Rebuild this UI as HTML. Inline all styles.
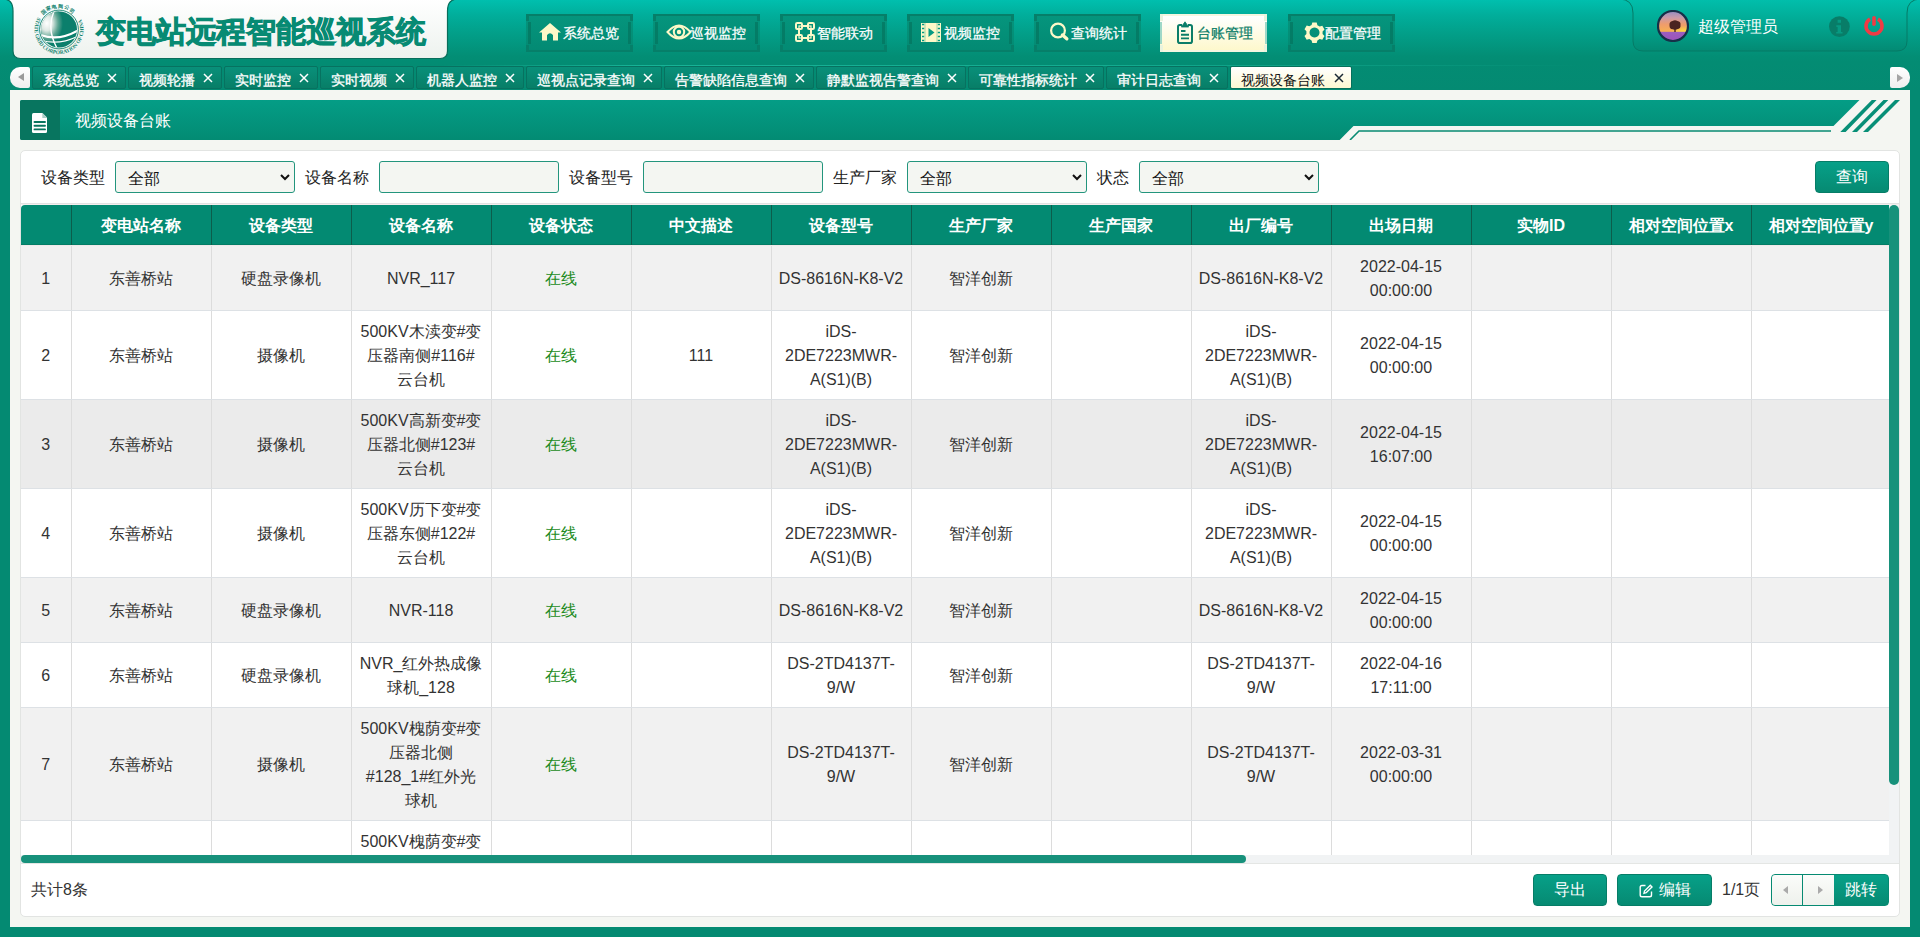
<!DOCTYPE html><html><head><meta charset="utf-8"><style>*{box-sizing:border-box;margin:0;padding:0}
html,body{width:1920px;height:937px;overflow:hidden;font-family:"Liberation Sans",sans-serif;}
body{background:#048a72;position:relative}
.abs{position:absolute}
#hdr{left:0;top:0;width:1920px;height:90px;background:linear-gradient(#00bfae 0px,#01ae9b 15px,#02a08a 32px,#038e75 56px,#038c73 62px,#048a72 90px)}
#hl{left:0;top:65px;width:1920px;height:1px;background:linear-gradient(90deg,rgba(40,210,180,0) 440px,rgba(40,210,180,.55) 640px,rgba(40,210,180,.45) 1100px,rgba(40,210,180,0) 1580px)}
#logo{left:13px;top:-2px;width:435px;height:61px;background:linear-gradient(#ffffff,#eef2ee);border:1px solid #0a6f5c;border-top:none;border-radius:0 0 7px 7px;box-shadow:0 1px 1px rgba(0,60,50,.4)}
#title{left:96px;top:11.5px;font-size:30px;font-weight:bold;color:#078a73;white-space:nowrap;-webkit-text-stroke:0.9px #078a73}
.nb{top:14px;height:38px;width:107px;background:linear-gradient(#05957d,#038a73);border-top:2px solid #067f69;border-bottom:2px solid #067f69;color:#fff;font-size:14px;white-space:nowrap}
.nb span{position:absolute;top:9px;left:37px;-webkit-text-stroke:0.25px currentColor}
.nb svg{position:absolute;left:13px;top:7px}
.nb.act{left:1160px!important;background:linear-gradient(#ffffff,#fdf8cc);border-color:#f4f6e0;color:#0b7d68}
.nb i{position:absolute;width:3px;background:#067f69}
.nb .c1{left:0;top:-2px;height:7px}.nb .c2{right:0;top:-2px;height:7px}.nb .c3{left:0;bottom:-2px;height:7px}.nb .c4{right:0;bottom:-2px;height:7px}
.nb .c5{left:2px;top:6px;bottom:6px;width:3px;background:rgba(4,118,96,.75)}.nb .c6{right:2px;top:6px;bottom:6px;width:3px;background:rgba(4,118,96,.75)}
.nb.act i{background:#e9f3de}.nb.act .c5,.nb.act .c6{left:0;width:2px;background:#9fd8c8}.nb.act .c6{left:auto;right:0}
#user{left:1633px;top:-2px;width:275px;height:53px;background:linear-gradient(#04b8a4,#05937c);border:1px solid #07806a;border-top:none;border-radius:0 0 12px 12px}
.tab{top:66px;height:23px;background:linear-gradient(#09907a,#087e67);border:1px solid #077260;border-radius:2px;color:#fff;font-size:14px;white-space:nowrap}
.tab span{position:absolute;left:10px;top:5px;-webkit-text-stroke:0.3px currentColor}
.tab svg{position:absolute;right:8px;top:6px}
.tab.act{background:linear-gradient(#ffffff,#fdf8d2);color:#111;border-color:#06705c}
.tab.act svg{right:7px;top:5.5px}
#tl{left:10px;top:67px;width:20px;height:21px;background:linear-gradient(#fff,#eee);border-radius:10px 2px 2px 10px}
#tr{left:1890px;top:67px;width:20px;height:21px;background:linear-gradient(#fff,#eee);border-radius:2px 10px 10px 2px}
#tl b{position:absolute;left:8px;top:6px;border-right:6px solid #9a9a9a;border-top:4.5px solid transparent;border-bottom:4.5px solid transparent}
#tr b{position:absolute;left:7px;top:7px;border-left:6px solid #a5a5a5;border-top:4px solid transparent;border-bottom:4px solid transparent}
#content{left:10px;top:90px;width:1900px;height:837px;background:#f4f6f2}
#panel{left:20px;top:150px;width:1880px;height:767px;background:#fff;border:1px solid #e2e4e2;border-radius:5px}
.lbl{font-size:16px;color:#222;top:168px;white-space:nowrap}
.sel{top:161px;height:32px;width:180px;border:1px solid #23957d;border-radius:3px;background:#f4f6f2;font-size:16px;color:#111}
.sel span{position:absolute;left:12px;top:7px}
.sel svg{position:absolute;right:4px;top:12px}
.btn{background:linear-gradient(#07a088,#068a72);border:1px solid #067d67;border-radius:4px;color:#fff;font-size:16px;text-align:center}
#tblwrap{left:21px;top:205px;width:1868px;height:650px;overflow:hidden;border-radius:4px 0 0 0}
table{border-collapse:collapse;table-layout:fixed;width:1870px}
td,th{border:1px solid #dde1e5;border-left-color:#dcdcdc;border-right-color:#dcdcdc;text-align:center;vertical-align:middle;font-size:16px;color:#333;line-height:24px;padding:2px 6px 0;font-weight:normal;word-break:break-all}
th{background:#038a72;color:#fff;font-weight:bold;border-color:#0c5d4b;height:40px;border-top:none;border-bottom-color:#eee9e9;box-shadow:inset 0 -1px 0 #037d66}
tr td:first-child,tr th:first-child{border-left:none}
tr.r1 td{background:#f1f1f1}
tr.r0 td{background:#fff}
tr.r3 td{background:#ebebeb}
td em{font-style:normal;color:#228b22}
.tab.act span{-webkit-text-stroke:0}
</style></head><body>
<div id="hdr" class="abs"></div><div id="hl" class="abs"></div>
<svg class="abs" style="left:0;top:0" width="470" height="64" viewBox="0 0 470 64"><defs><linearGradient id="lg" x1="0" y1="0" x2="0" y2="1"><stop offset="0" stop-color="#ffffff"/><stop offset="1" stop-color="#edf2ee"/></linearGradient></defs><path d="M3 -1 Q13 -1 13 11 V51 Q13 58.5 20.5 58.5 H440 Q447.5 58.5 447.5 51 V11 Q447.5 -1 458 -1Z" fill="url(#lg)" stroke="#086e5b" stroke-width="1.2"/></svg>
<svg class="abs" style="left:28px;top:0px" width="64" height="60" viewBox="0 0 64 60">
<defs>
<radialGradient id="gl" cx="0.3" cy="0.42" r="0.62"><stop offset="0" stop-color="#ffffff"/><stop offset="0.35" stop-color="#dfe9e4"/><stop offset="0.7" stop-color="#5fa593"/><stop offset="1" stop-color="#0b7f6c"/></radialGradient>
<clipPath id="gc"><circle cx="31" cy="29.5" r="18"/></clipPath>
<path id="ringp" d="M9.8 17.25 A24.5 24.5 0 1 0 52.2 17.25"/>
<path id="ringt" d="M12.5 18.5 A21.5 21.5 0 0 1 49.5 18.5"/>
</defs>
<circle cx="31" cy="29.5" r="19.4" fill="none" stroke="#0b806c" stroke-width="0.9"/>
<g clip-path="url(#gc)">
<rect x="10" y="10" width="42" height="40" fill="#0b7f6c"/>
<ellipse cx="24" cy="26" rx="13" ry="17" fill="url(#gl)"/>
<path d="M8 33 Q30 44 54 28" stroke="#fff" stroke-width="2.2" fill="none"/>
<path d="M12 40 Q32 46 52 35" stroke="#fff" stroke-width="1.2" fill="none"/>
<path d="M26 11 Q18 30 30 50" stroke="#fff" stroke-width="1.4" fill="none"/>
</g>
<text font-family="Liberation Serif" font-weight="bold" font-size="5.4" fill="#0b806c"><textPath href="#ringp" textLength="100" lengthAdjust="spacingAndGlyphs">STATE GRID CORPORATION OF CHINA</textPath></text>
<text font-weight="bold" font-size="5" fill="#0b806c"><textPath href="#ringt" startOffset="4" textLength="34" lengthAdjust="spacing">国家电网公司</textPath></text>
</svg>

<div id="title" class="abs">变电站远程智能巡视系统</div>
<div class="nb abs" style="left:526px"><i class="c1"></i><i class="c2"></i><i class="c3"></i><i class="c4"></i><i class="c5"></i><i class="c6"></i><svg width="24" height="20" viewBox="0 0 24 20" style="left:12px;top:6px"><path d="M12 1 L23 10.5 L20 10.5 L20 18.5 L15 18.5 L15 13 Q12 9.5 9 13 L9 18.5 L4 18.5 L4 10.5 L1 10.5 Z" fill="#fdf8c8"/></svg><span>系统总览</span></div>
<div class="nb abs" style="left:653px"><i class="c1"></i><i class="c2"></i><i class="c3"></i><i class="c4"></i><i class="c5"></i><i class="c6"></i><svg width="26" height="18" viewBox="0 0 26 18" style="left:13px;top:7px"><path d="M1.5 9 Q13 -4 24.5 9 Q13 22 1.5 9 Z" fill="none" stroke="#fdf8c8" stroke-width="2"/><circle cx="13" cy="9" r="5.2" fill="none" stroke="#fdf8c8" stroke-width="2"/><circle cx="13" cy="9" r="2.2" fill="#fdf8c8"/></svg><span>巡视监控</span></div>
<div class="nb abs" style="left:780px"><i class="c1"></i><i class="c2"></i><i class="c3"></i><i class="c4"></i><i class="c5"></i><i class="c6"></i><svg width="20" height="20" viewBox="0 0 20 20" style="left:15px;top:6px" fill="none" stroke="#fdf8c8" stroke-width="2"><rect x="1" y="1" width="6" height="6" rx="1.2"/><rect x="13" y="1" width="6" height="6" rx="1.2"/><rect x="1" y="13" width="6" height="6" rx="1.2"/><rect x="13" y="13" width="6" height="6" rx="1.2"/><path d="M7 4H13M7 16H13M4 7V13M16 7V13"/><rect x="4" y="4" width="12" height="12" stroke-width="1.2"/></svg><span>智能联动</span></div>
<div class="nb abs" style="left:907px"><i class="c1"></i><i class="c2"></i><i class="c3"></i><i class="c4"></i><i class="c5"></i><i class="c6"></i><svg width="20" height="19" viewBox="0 0 20 19" style="left:14px;top:7px"><rect x="0" y="0" width="20" height="19" fill="#fdf8c8"/><path d="M1 1.5h2.2M1 5.5h2.2M1 9.5h2.2M1 13.5h2.2M1 17.5h2.2M16.8 1.5h2.2M16.8 5.5h2.2M16.8 9.5h2.2M16.8 13.5h2.2M16.8 17.5h2.2" stroke="#079a82" stroke-width="1.6"/><path d="M4 0V19M16 0V19" stroke="#079a82" stroke-width="0.6" opacity="0.6"/><path d="M7.5 5 L13.5 9.5 L7.5 14 Z" fill="#079a82"/></svg><span>视频监控</span></div>
<div class="nb abs" style="left:1034px"><i class="c1"></i><i class="c2"></i><i class="c3"></i><i class="c4"></i><i class="c5"></i><i class="c6"></i><svg width="22" height="22" viewBox="0 0 22 22" style="left:14px;top:5px"><circle cx="10" cy="9.5" r="6.9" fill="none" stroke="#fdf8c8" stroke-width="2.2"/><path d="M14.5 14 L18.8 17.8" stroke="#fdf8c8" stroke-width="3.4" stroke-linecap="round"/></svg><span>查询统计</span></div>
<div class="nb abs act" style="left:1161px"><i class="c1"></i><i class="c2"></i><i class="c3"></i><i class="c4"></i><i class="c5"></i><i class="c6"></i><svg width="16" height="23" viewBox="0 0 16 23" style="left:17px;top:5px" fill="none" stroke="#0b7d68" stroke-width="2"><path d="M5 4 H2.8 Q1 4 1 5.8 V20.2 Q1 22 2.8 22 H13.2 Q15 22 15 20.2 V5.8 Q15 4 13.2 4 H11"/><path d="M4.3 6 L8 0.8 L11.7 6 Z" fill="#0b7d68" stroke-width="0.8"/><path d="M4 10 H8.5 M4 13.8 H12 M4 17.4 H12" stroke-width="1.9"/></svg><span>台账管理</span></div>
<div class="nb abs" style="left:1288px"><i class="c1"></i><i class="c2"></i><i class="c3"></i><i class="c4"></i><i class="c5"></i><i class="c6"></i><svg width="21" height="21" viewBox="0 0 21 21" style="left:16px;top:5.5px"><path fill="#fdf8c8" fill-rule="evenodd" d="M8.3 0.6h4.4l0.7 2.6 2.3 1.3 2.6-0.7 2.2 3.8-1.9 1.9v2.6l1.9 1.9-2.2 3.8-2.6-0.7-2.3 1.3-0.7 2.6H8.3l-0.7-2.6-2.3-1.3-2.6 0.7-2.2-3.8 1.9-1.9V9.2L0.5 7.3l2.2-3.8 2.6 0.7 2.3-1.3z M10.5 5.5a5 5 0 1 0 0.01 0z"/></svg><span>配置管理</span></div>
<svg class="abs" style="left:1615px;top:0" width="305" height="56" viewBox="1615 0 305 56">
<defs><linearGradient id="ug" x1="0" y1="0" x2="0" y2="1"><stop offset="0" stop-color="#01bfac"/><stop offset="0.5" stop-color="#02a690"/><stop offset="1" stop-color="#038a73"/></linearGradient></defs>
<path d="M1619 -1 Q1633 -1 1633 13 V41 Q1633 51 1643 51 H1897 Q1907 51 1907 41 V13 Q1907 -1 1921 -1" fill="url(#ug)" stroke="#067a66" stroke-width="1"/>
</svg>
<svg class="abs" style="left:1657px;top:10px" width="32" height="32" viewBox="0 0 32 32"><defs><linearGradient id="av" x1="0" y1="0" x2="0" y2="1"><stop offset="0" stop-color="#8a8cc8"/><stop offset="0.35" stop-color="#c99aa8"/><stop offset="0.65" stop-color="#ef9c6c"/><stop offset="1" stop-color="#f7b050"/></linearGradient><linearGradient id="fld" x1="0" y1="0" x2="0" y2="1"><stop offset="0" stop-color="#9a5ec0"/><stop offset="1" stop-color="#a050b8"/></linearGradient><radialGradient id="sun" cx="0.85" cy="1" r="0.45"><stop offset="0" stop-color="#ffe040"/><stop offset="1" stop-color="#ffe040" stop-opacity="0"/></radialGradient><clipPath id="avc"><circle cx="16" cy="16" r="15"/></clipPath></defs><g clip-path="url(#avc)"><rect x="0" y="0" width="32" height="22" fill="url(#av)"/><rect x="0" y="8" width="32" height="14" fill="url(#sun)"/><rect x="0" y="21.8" width="32" height="11" fill="url(#fld)"/><path d="M12.5 15.5 Q12 11.5 15.5 11 Q18 9.5 20.5 11 Q24 11.5 23.5 15 Q24 19 20 19.2 Q18 20.5 16 19.2 Q12.5 19.5 12.5 15.5Z" fill="#4a2420"/><rect x="17.3" y="18" width="1.4" height="4" fill="#4a2420"/></g><circle cx="16" cy="16" r="15" fill="none" stroke="#163048" stroke-width="2.2"/></svg>
<div class="abs" style="left:1698px;top:17px;font-size:16px;color:#fff;white-space:nowrap">超级管理员</div>
<svg class="abs" style="left:1829px;top:16px" width="22" height="22" viewBox="0 0 22 22"><circle cx="10.4" cy="10.6" r="10.4" fill="#087d68"/><rect x="8.6" y="3.8" width="3.4" height="3" fill="#079a82"/><path d="M7.3 9.3h4.7v6.6h1.5v1.7H7.2v-1.7h1.4v-4.9H7.3z" fill="#079a82"/></svg>
<svg class="abs" style="left:1863px;top:15px" width="22" height="22" viewBox="0 0 22 22" fill="none" stroke="#f03a44" stroke-width="3.6"><path d="M7 4.07 A8 8 0 1 0 15 4.07"/><path d="M11 2.8V9.3" stroke-linecap="round"/></svg>

<div class="tab abs" style="left:32px;width:94px"><span>系统总览</span><svg width="10" height="10" viewBox="0 0 10 10"><path d="M1 1L9 9M9 1L1 9" stroke="#fff" stroke-width="1.5"/></svg></div>
<div class="tab abs" style="left:128px;width:94px"><span>视频轮播</span><svg width="10" height="10" viewBox="0 0 10 10"><path d="M1 1L9 9M9 1L1 9" stroke="#fff" stroke-width="1.5"/></svg></div>
<div class="tab abs" style="left:224px;width:94px"><span>实时监控</span><svg width="10" height="10" viewBox="0 0 10 10"><path d="M1 1L9 9M9 1L1 9" stroke="#fff" stroke-width="1.5"/></svg></div>
<div class="tab abs" style="left:320px;width:94px"><span>实时视频</span><svg width="10" height="10" viewBox="0 0 10 10"><path d="M1 1L9 9M9 1L1 9" stroke="#fff" stroke-width="1.5"/></svg></div>
<div class="tab abs" style="left:416px;width:108px"><span>机器人监控</span><svg width="10" height="10" viewBox="0 0 10 10"><path d="M1 1L9 9M9 1L1 9" stroke="#fff" stroke-width="1.5"/></svg></div>
<div class="tab abs" style="left:526px;width:136px"><span>巡视点记录查询</span><svg width="10" height="10" viewBox="0 0 10 10"><path d="M1 1L9 9M9 1L1 9" stroke="#fff" stroke-width="1.5"/></svg></div>
<div class="tab abs" style="left:664px;width:150px"><span>告警缺陷信息查询</span><svg width="10" height="10" viewBox="0 0 10 10"><path d="M1 1L9 9M9 1L1 9" stroke="#fff" stroke-width="1.5"/></svg></div>
<div class="tab abs" style="left:816px;width:150px"><span>静默监视告警查询</span><svg width="10" height="10" viewBox="0 0 10 10"><path d="M1 1L9 9M9 1L1 9" stroke="#fff" stroke-width="1.5"/></svg></div>
<div class="tab abs" style="left:968px;width:136px"><span>可靠性指标统计</span><svg width="10" height="10" viewBox="0 0 10 10"><path d="M1 1L9 9M9 1L1 9" stroke="#fff" stroke-width="1.5"/></svg></div>
<div class="tab abs" style="left:1106px;width:122px"><span>审计日志查询</span><svg width="10" height="10" viewBox="0 0 10 10"><path d="M1 1L9 9M9 1L1 9" stroke="#fff" stroke-width="1.5"/></svg></div>
<div class="tab abs act" style="left:1230px;width:122px"><span>视频设备台账</span><svg width="10" height="10" viewBox="0 0 10 10"><path d="M1 1L9 9M9 1L1 9" stroke="#1a2835" stroke-width="1.5"/></svg></div>
<div id="tl" class="abs"><b></b></div><div id="tr" class="abs"><b></b></div>
<div id="content" class="abs"></div>
<svg class="abs" style="left:20px;top:100px" width="1880" height="40" viewBox="0 0 1880 40">
<defs><linearGradient id="tb" x1="0" y1="0" x2="0" y2="1"><stop offset="0" stop-color="#049d86"/><stop offset="1" stop-color="#038b73"/></linearGradient></defs>
<path d="M2 0 H1839.5 L1813.5 26 H1333.5 L1319.7 40 H2 Q0 40 0 38 V2 Q0 0 2 0Z" fill="url(#tb)"/>
<path d="M0 2 Q0 0 2 0 H40 V40 H2 Q0 40 0 38Z" fill="#08755f"/>
<path d="M1330 40 L1339 31 H1811" stroke="#078b73" stroke-width="1.6" fill="none"/>
<path d="M1851.8 0 H1856.6 L1825.6 32 H1820.3Z M1863.5 0 H1868.3 L1837 32 H1832Z M1875 0 H1880 L1848 32 H1843Z" fill="#078f77"/>
<path d="M13.5 13 H22.5 L27 17.5 V31.5 Q27 33 25.5 33 H13.5 Q12 33 12 31.5 V14.5 Q12 13 13.5 13Z" fill="#fff"/>
<path d="M22.3 13 V18 H27 Z" fill="#08755f" opacity="0.35"/>
<path d="M14.5 22H25M14.5 25.7H25M14.5 29.4H25" stroke="#08755f" stroke-width="1.9" stroke-linecap="round"/>
</svg>
<div class="abs" style="left:75px;top:111px;font-size:16px;color:#fff;white-space:nowrap">视频设备台账</div>

<div id="panel" class="abs"></div>
<div class="lbl abs" style="left:41px">设备类型</div>
<div class="sel abs" style="left:115px"><span>全部</span><svg width="10" height="7" viewBox="0 0 10 7"><path d="M1 1 L5 5 L9 1" stroke="#111" stroke-width="2" fill="none"/></svg></div>
<div class="lbl abs" style="left:305px">设备名称</div>
<div class="sel abs" style="left:379px"></div>
<div class="lbl abs" style="left:569px">设备型号</div>
<div class="sel abs" style="left:643px"></div>
<div class="lbl abs" style="left:833px">生产厂家</div>
<div class="sel abs" style="left:907px"><span>全部</span><svg width="10" height="7" viewBox="0 0 10 7"><path d="M1 1 L5 5 L9 1" stroke="#111" stroke-width="2" fill="none"/></svg></div>
<div class="lbl abs" style="left:1097px">状态</div>
<div class="sel abs" style="left:1139px"><span>全部</span><svg width="10" height="7" viewBox="0 0 10 7"><path d="M1 1 L5 5 L9 1" stroke="#111" stroke-width="2" fill="none"/></svg></div>
<div class="btn abs" style="left:1815px;top:161px;width:74px;height:32px;line-height:30px">查询</div>
<div class="abs" style="left:20px;top:203px;width:1880px;height:1px;background:#e2e2e2"></div>
<div class="abs" style="left:21px;top:204px;width:1878px;height:1px;background:#f4eeee"></div>

<div id="tblwrap" class="abs"><table>
<colgroup><col style="width:50px"><col style="width:140px"><col style="width:140px"><col style="width:140px"><col style="width:140px"><col style="width:140px"><col style="width:140px"><col style="width:140px"><col style="width:140px"><col style="width:140px"><col style="width:140px"><col style="width:140px"><col style="width:140px"><col style="width:140px"></colgroup>
<tr class="hd"><th></th><th>变电站名称</th><th>设备类型</th><th>设备名称</th><th>设备状态</th><th>中文描述</th><th>设备型号</th><th>生产厂家</th><th>生产国家</th><th>出厂编号</th><th>出场日期</th><th>实物ID</th><th>相对空间位置x</th><th>相对空间位置y</th></tr>
<tr class="r1" style="height:65px"><td>1</td><td>东善桥站</td><td>硬盘录像机</td><td>NVR_117</td><td><em>在线</em></td><td></td><td>DS-8616N-K8-V2</td><td>智洋创新</td><td></td><td>DS-8616N-K8-V2</td><td>2022-04-15<br>00:00:00</td><td></td><td></td><td></td></tr>
<tr class="r0" style="height:89px"><td>2</td><td>东善桥站</td><td>摄像机</td><td>500KV木渎变#变<br>压器南侧#116#<br>云台机</td><td><em>在线</em></td><td>111</td><td>iDS-<br>2DE7223MWR-<br>A(S1)(B)</td><td>智洋创新</td><td></td><td>iDS-<br>2DE7223MWR-<br>A(S1)(B)</td><td>2022-04-15<br>00:00:00</td><td></td><td></td><td></td></tr>
<tr class="r3" style="height:89px"><td>3</td><td>东善桥站</td><td>摄像机</td><td>500KV高新变#变<br>压器北侧#123#<br>云台机</td><td><em>在线</em></td><td></td><td>iDS-<br>2DE7223MWR-<br>A(S1)(B)</td><td>智洋创新</td><td></td><td>iDS-<br>2DE7223MWR-<br>A(S1)(B)</td><td>2022-04-15<br>16:07:00</td><td></td><td></td><td></td></tr>
<tr class="r0" style="height:89px"><td>4</td><td>东善桥站</td><td>摄像机</td><td>500KV历下变#变<br>压器东侧#122#<br>云台机</td><td><em>在线</em></td><td></td><td>iDS-<br>2DE7223MWR-<br>A(S1)(B)</td><td>智洋创新</td><td></td><td>iDS-<br>2DE7223MWR-<br>A(S1)(B)</td><td>2022-04-15<br>00:00:00</td><td></td><td></td><td></td></tr>
<tr class="r1" style="height:65px"><td>5</td><td>东善桥站</td><td>硬盘录像机</td><td>NVR-118</td><td><em>在线</em></td><td></td><td>DS-8616N-K8-V2</td><td>智洋创新</td><td></td><td>DS-8616N-K8-V2</td><td>2022-04-15<br>00:00:00</td><td></td><td></td><td></td></tr>
<tr class="r0" style="height:65px"><td>6</td><td>东善桥站</td><td>硬盘录像机</td><td>NVR_红外热成像<br>球机_128</td><td><em>在线</em></td><td></td><td>DS-2TD4137T-<br>9/W</td><td>智洋创新</td><td></td><td>DS-2TD4137T-<br>9/W</td><td>2022-04-16<br>17:11:00</td><td></td><td></td><td></td></tr>
<tr class="r1" style="height:113px"><td>7</td><td>东善桥站</td><td>摄像机</td><td>500KV槐荫变#变<br>压器北侧<br>#128_1#红外光<br>球机</td><td><em>在线</em></td><td></td><td>DS-2TD4137T-<br>9/W</td><td>智洋创新</td><td></td><td>DS-2TD4137T-<br>9/W</td><td>2022-03-31<br>00:00:00</td><td></td><td></td><td></td></tr>
<tr class="r0" style="height:113px"><td>8</td><td>东善桥站</td><td>摄像机</td><td>500KV槐荫变#变<br>压器北侧<br>#128_2#红外光<br>球机</td><td><em>在线</em></td><td></td><td>DS-2TD4137T-<br>9/W</td><td>智洋创新</td><td></td><td>DS-2TD4137T-<br>9/W</td><td>2022-03-31<br>00:00:00</td><td></td><td></td><td></td></tr>
</table></div>
<div class="abs" style="left:21px;top:855px;width:1878px;height:8px;background:#f1f3f4"></div>
<div class="abs" style="left:21px;top:855px;width:1225px;height:8px;background:#17917b;border-radius:4px"></div>
<div class="abs" style="left:1889px;top:205px;width:10px;height:650px;background:#f1f3f4"></div>
<div class="abs" style="left:1889px;top:205px;width:10px;height:580px;background:#17917b;border-radius:5px"></div>
<div class="abs" style="left:21px;top:863px;width:1878px;height:1px;background:#e4e6e4"></div>
<div class="abs" style="left:31px;top:880px;font-size:16px;color:#333;white-space:nowrap">共计8条</div>
<div class="btn abs" style="left:1533px;top:874px;width:74px;height:32px;line-height:30px">导出</div>
<div class="btn abs" style="left:1617px;top:874px;width:95px;height:32px;line-height:30px"><svg style="position:absolute;left:21px;top:9px" width="14" height="14" viewBox="0 0 14 14" fill="none" stroke="#fff" stroke-width="1.4"><path d="M6.5 1.5H3Q1.2 1.5 1.2 3.3V11Q1.2 12.8 3 12.8H10.7Q12.5 12.8 12.5 11V7.5"/><path d="M11.3 1.2L13 2.9L7.2 8.7L5 9.2L5.5 7Z"/></svg><span style="position:absolute;left:41px;top:0">编辑</span></div>
<div class="abs" style="left:1722px;top:880px;font-size:16px;color:#333;white-space:nowrap">1/1页</div>
<div class="abs" style="left:1771px;top:874px;width:118px;height:32px;border:1px solid #068a72;border-radius:4px;background:linear-gradient(#07a088,#068a72);overflow:hidden">
<div class="abs" style="left:0;top:0;width:31px;height:30px;background:linear-gradient(#fbfcfa,#eef1ec);border-right:1px solid #078a72"></div>
<div class="abs" style="left:31px;top:0;width:31px;height:30px;background:linear-gradient(#fbfcfa,#eef1ec)"></div>
<i class="abs" style="left:11px;top:11px;border-right:5px solid #aaa;border-top:4px solid transparent;border-bottom:4px solid transparent"></i>
<i class="abs" style="left:46px;top:11px;border-left:5px solid #aaa;border-top:4px solid transparent;border-bottom:4px solid transparent"></i>
<span class="abs" style="left:73px;top:5px;color:#fff;font-size:16px;white-space:nowrap">跳转</span>
</div>

</body></html>
